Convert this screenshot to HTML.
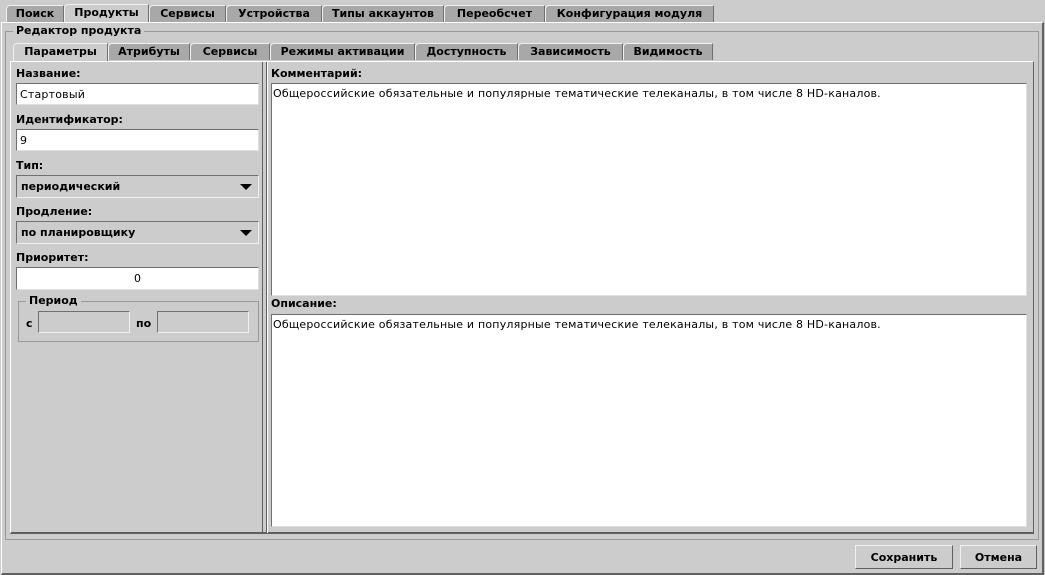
<!DOCTYPE html>
<html><head><meta charset="utf-8"><style>
*{box-sizing:border-box;margin:0;padding:0}
body{width:1045px;height:575px;background:#cccccc;font-family:"DejaVu Sans","Liberation Sans",sans-serif;font-size:11px;color:#000;position:relative;overflow:hidden}
.a{position:absolute}
.b{font-weight:bold}
.tab{position:absolute;height:17px;background:#a8a8a8;border:1px solid #808080;border-bottom:none;border-top:1px solid #f0f0f0;border-left:1px solid #f0f0f0;border-right:1px solid #707070;font-weight:bold;text-align:center;line-height:16px;border-radius:4px 0 0 0}
.tab.act{background:#cccccc;height:18px;z-index:2}
.inp{position:absolute;background:#fff;border:1px solid #707070;border-right-color:#e0e0e0;border-bottom-color:#e0e0e0;padding-left:3px;line-height:21px}
.cmb{position:absolute;background:#cccccc;border:1px solid #707070;border-right-color:#f0f0f0;border-bottom-color:#f0f0f0;font-weight:bold;padding-left:4px;line-height:21px}
.cmb:after{content:"";position:absolute;right:6px;top:8px;border-left:6px solid transparent;border-right:6px solid transparent;border-top:6px solid #000}
.dis{position:absolute;background:#cccccc;border:1px solid #707070;border-right-color:#f0f0f0;border-bottom-color:#f0f0f0}
.btn{position:absolute;border:1px solid #f0f0f0;border-right-color:#606060;border-bottom-color:#606060;font-weight:bold;text-align:center;line-height:23px;background:#cccccc}
.t{letter-spacing:0.2px}
</style></head><body>
<div class="a" style="left:1px;top:22px;width:1043px;height:553px;border-left:1px solid #fff;border-top:1px solid #fff;border-right:2px solid #606060;border-bottom:2px solid #606060"></div>
<div class="tab" style="left:6px;top:5px;width:58px">Поиск</div>
<div class="tab act" style="left:64px;top:4px;width:85px">Продукты</div>
<div class="tab" style="left:149px;top:5px;width:77px">Сервисы</div>
<div class="tab" style="left:226px;top:5px;width:96px">Устройства</div>
<div class="tab" style="left:322px;top:5px;width:122px">Типы аккаунтов</div>
<div class="tab" style="left:444px;top:5px;width:101px">Переобсчет</div>
<div class="tab" style="left:545px;top:5px;width:169px">Конфигурация модуля</div>
<div class="a" style="left:5px;top:31px;width:1034px;height:509px;border:1px solid #999"></div>
<div class="a b" style="left:13px;top:24px;padding:0 3px;background:#ccc">Редактор продукта</div>
<div class="a" style="left:10px;top:61px;width:1024px;height:473px;border-left:1px solid #fff;border-top:1px solid #fff;border-right:1px solid #606060;border-bottom:2px solid #606060"></div>
<div class="tab" style="left:108px;top:43px;width:82px">Атрибуты</div>
<div class="tab act" style="left:13px;top:43px;width:95px">Параметры</div>
<div class="tab" style="left:190px;top:43px;width:80px">Сервисы</div>
<div class="tab" style="left:270px;top:43px;width:145px">Режимы активации</div>
<div class="tab" style="left:415px;top:43px;width:103px">Доступность</div>
<div class="tab" style="left:518px;top:43px;width:105px">Зависимость</div>
<div class="tab" style="left:623px;top:43px;width:90px">Видимость</div>
<div class="a" style="left:262px;top:62px;width:1px;height:471px;background:#606060"></div>
<div class="a" style="left:266px;top:62px;width:1px;height:471px;background:#606060"></div>
<div class="a" style="left:267px;top:62px;width:1px;height:471px;background:#fff"></div>
<div class="a b" style="left:16px;top:67px">Название:</div>
<div class="inp t" style="left:16px;top:83px;width:243px;height:22px">Стартовый</div>
<div class="a b" style="left:16px;top:113px">Идентификатор:</div>
<div class="inp" style="left:16px;top:129px;width:243px;height:22px">9</div>
<div class="a b" style="left:16px;top:159px">Тип:</div>
<div class="cmb" style="left:16px;top:175px;width:243px;height:23px">периодический</div>
<div class="a b" style="left:16px;top:205px">Продление:</div>
<div class="cmb" style="left:16px;top:221px;width:243px;height:23px">по планировщику</div>
<div class="a b" style="left:16px;top:251px">Приоритет:</div>
<div class="inp" style="left:16px;top:267px;width:243px;height:23px;text-align:center;padding:0">0</div>
<div class="a" style="left:18px;top:301px;width:241px;height:41px;border:1px solid #999"></div>
<div class="a b" style="left:26px;top:294px;padding:0 3px;background:#ccc">Период</div>
<div class="a b" style="left:26px;top:317px">с</div>
<div class="dis" style="left:38px;top:311px;width:92px;height:22px"></div>
<div class="a b" style="left:136px;top:317px">по</div>
<div class="dis" style="left:157px;top:311px;width:92px;height:22px"></div>
<div class="a b" style="left:271px;top:67px">Комментарий:</div>
<div class="inp t" style="left:271px;top:83px;width:756px;height:213px;line-height:16px;padding:2px 1px">Общероссийские обязательные и популярные тематические телеканалы, в том числе 8 HD-каналов.</div>
<div class="a b" style="left:271px;top:297px">Описание:</div>
<div class="inp t" style="left:271px;top:314px;width:756px;height:213px;line-height:16px;padding:2px 1px">Общероссийские обязательные и популярные тематические телеканалы, в том числе 8 HD-каналов.</div>
<div class="btn" style="left:855px;top:545px;width:98px;height:24px">Сохранить</div>
<div class="btn" style="left:960px;top:545px;width:77px;height:24px">Отмена</div>
</body></html>
